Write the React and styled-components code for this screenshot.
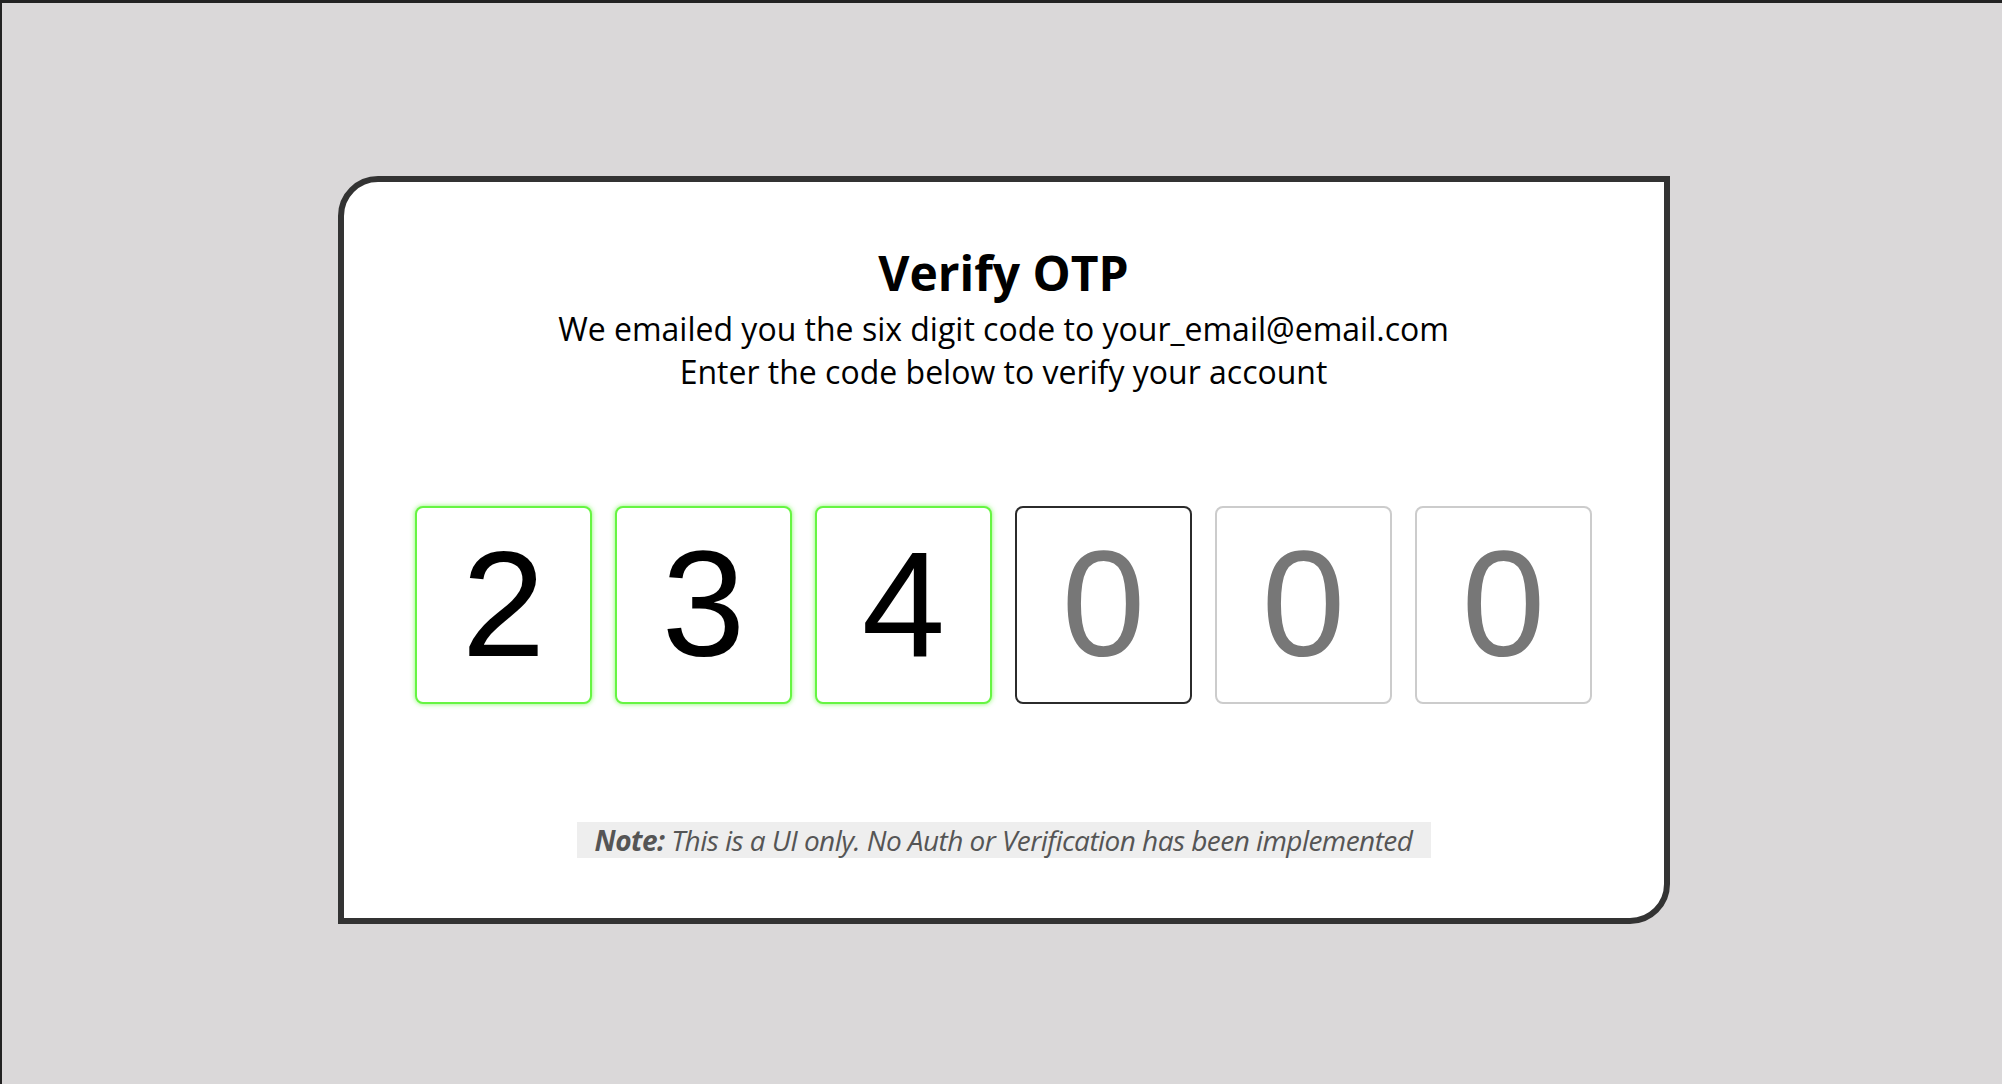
import React from "react";
import styled, { createGlobalStyle } from "styled-components";

const GlobalStyle = createGlobalStyle`
  * {
    box-sizing: border-box;
  }
  html, body {
    margin: 0;
    padding: 0;
  }
  body {
    font-family: "Open Sans", "Noto Sans", sans-serif;
    background: #dad8d9;
  }
`;

const DIGITS = ["2", "3", "4", "", "", ""];
// which box has focus right now
const ACTIVE = 3;

const App = () => {
  return (
    <>
      <GlobalStyle />
      <Page>
        <Card>
          <Title>Verify OTP</Title>
          <Subtitle>
            We emailed you the six digit code to your_email@email.com
            <br />
            Enter the code below to verify your account
          </Subtitle>
          <CodeRow>
            {DIGITS.map((d, i) => (
              <DigitBox
                key={i}
                readOnly
                value={d}
                placeholder="0"
                $state={d ? "filled" : i === ACTIVE ? "active" : "empty"}
              />
            ))}
          </CodeRow>
          <Note>
            <b>Note:</b> This is a UI only. No Auth or Verification has been
            implemented
          </Note>
        </Card>
      </Page>
    </>
  );
};

export default App;

const Page = styled.div`
  width: 100vw;
  height: 100vh;
  border-top: 3px solid #222;
  border-left: 2px solid #222;
  display: flex;
  align-items: center;
  justify-content: center;
  padding-top: 12px;
  padding-left: 3px;
`;

const Card = styled.div`
  width: 1332px;
  height: 748px;
  background: #fff;
  border: 6px solid #333;
  border-radius: 40px 0 40px 0;
  padding: 57px 0 0;

  display: flex;
  flex-direction: column;
  align-items: center;
`;

const Title = styled.h1`
  margin: 0;
  font-size: 48px;
  font-weight: 700;
  color: #000;
  line-height: 68px;
`;

const Subtitle = styled.p`
  margin: 0;
  font-size: 32px;
  line-height: 43px;
  color: #000;
  text-align: center;
`;

const CodeRow = styled.div`
  margin-top: 113px;
  display: flex;
  gap: 23px;
`;

const borders = {
  filled: "#66f542",
  active: "#2b2b2b",
  empty: "#cccccc",
};

const DigitBox = styled.input`
  width: 177px;
  height: 198px;
  border: 2px solid ${({ $state }) => borders[$state]};
  border-radius: 8px;
  background: #fff;
  box-shadow: ${({ $state }) =>
    $state === "filled" ? "0 0 5px rgba(102, 245, 66, 0.8)" : "none"};
  outline: none;
  padding: 0;

  font-family: "Liberation Sans", Arial, sans-serif;
  font-size: 150px;
  color: #000;
  text-align: center;

  &::placeholder {
    color: #777;
    opacity: 1;
  }
`;

const Note = styled.div`
  margin-top: 118px;
  width: 854px;
  height: 36px;
  background: #eeeeee;
  color: #555;
  font-size: 28px;
  font-style: italic;
  letter-spacing: -0.55px;
  line-height: 36px;
  text-align: center;
  white-space: nowrap;

  b {
    font-weight: 700;
  }
`;
